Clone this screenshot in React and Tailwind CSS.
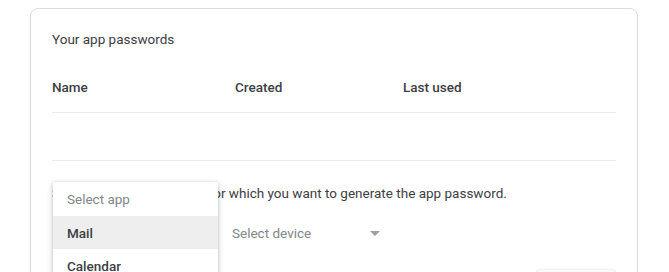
import React from 'react';

export default function App() {
  const apps = ["Mail", "Calendar", "Contacts", "YouTube"];

  return (
    <div className="w-[669px] h-[272px] overflow-hidden bg-white pt-2 pl-[30px] pr-[31px] font-['Roboto',sans-serif] text-[13.5px] leading-5 text-[#3c4043]">
      {/* CARD */}
      <div className="relative h-[320px] rounded-lg border border-[#dadce0] pl-[21px] pr-[21px] pt-[20px]">
        <h2 className="text-[13.5px] text-[#3c4043]">Your app passwords</h2>

        {/* TABLE HEADER */}
        <div className="mt-[28px] flex font-medium text-[#3c4043]">
          <div className="w-[183px]">Name</div>
          <div className="w-[168px]">Created</div>
          <div>Last used</div>
        </div>
        <div className="mt-[15px] h-[48px] border-t border-[#e8eaed]" />
        <div className="border-t border-[#e8eaed]" />

        {/* GENERATE SECTION */}
        <p className="mt-[22px] text-[#3c4043]">
          Select the app and device for which you want to generate the app password.
        </p>

        <div className="mt-[20px] flex items-center">
          <div className="w-[180px]" />
          <div className="flex w-[153px] items-center justify-between">
            <span className="text-[#80868b]">Select device</span>
            <svg width="10" height="5" viewBox="0 0 10 5" className="mr-[5px]">
              <path d="M0 0 L10 0 L5 5 Z" fill="#9aa0a6" />
            </svg>
          </div>
        </div>

        {/* GENERATE BUTTON (cut off) */}
        <div className="absolute left-[505px] top-[261px] h-9 w-[80px] rounded bg-[#f8f9fa] shadow-[0_0_2px_rgba(60,64,67,0.25)]" />

        {/* APP DROPDOWN */}
        <div className="absolute left-[22px] top-[173px] w-[165px] bg-white shadow-[0_2px_6px_rgba(60,64,67,0.3),0_0_2px_rgba(60,64,67,0.15)]">
          <div className="flex h-[34px] items-center px-[14px] text-[#80868b]">Select app</div>
          {apps.map((app, i) => (
            <div
              key={app}
              className={
                i === 0
                  ? "flex h-[33px] items-center bg-[#eeeeee] px-[14px] font-medium text-[#3c4043]"
                  : "flex h-[33px] items-center px-[14px] font-medium text-[#3c4043]"
              }
            >
              {app}
            </div>
          ))}
        </div>
      </div>
    </div>
  );
}
